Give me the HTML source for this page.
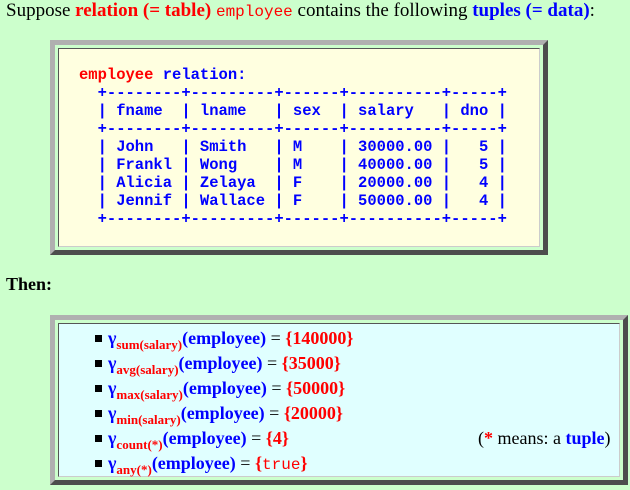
<!DOCTYPE html>
<html><head><style>
body{margin:0;background:#ccffcc;font-family:"Liberation Serif",serif;width:630px;height:490px;overflow:hidden;position:relative}
.p{position:absolute;left:6px;font-size:19px;margin:0;white-space:nowrap}
.r{color:#f00;font-weight:bold}.b{color:#00f;font-weight:bold}
.m{font-family:"Liberation Mono",monospace}
.box{position:absolute;border-style:solid;border-width:5px;border-color:#b0b0b0 #4d4d4d #4d4d4d #b0b0b0;padding:3px;box-sizing:border-box}
.in{border:1px solid;border-color:#555 #ccc #ccc #555;height:100%;box-sizing:border-box;position:relative}
pre{margin:0;position:absolute;left:20px;top:17px;font-family:"Liberation Mono",monospace;font-weight:bold;font-size:15.5px;line-height:18px;color:#00f}
ul{margin:0;padding:0;list-style:none;position:absolute;left:49px;top:2px;width:560px}
li{height:25px;line-height:25px;font-size:18px;font-weight:bold;color:#00f;position:relative;white-space:nowrap}
li:before{content:"";position:absolute;left:-13px;top:9px;width:7px;height:7px;background:#000}
sub{font-size:13px;color:#f00;vertical-align:-5px;line-height:0}
.eq{color:#000;font-weight:normal}
.v{color:#f00}
</style></head><body>
<p class="p" style="top:0px">Suppose <span class="r">relation (= table)</span> <span class="m" style="color:#f00;font-size:16px">employee</span> contains the following <span class="b">tuples (= data)</span>:</p>
<div class="box" style="left:50px;top:40px;width:498px;height:215px"><div class="in" style="background:#ffffe0"><pre><span style="color:#f00">employee</span> relation:
  +--------+---------+------+----------+-----+
  | fname  | lname   | sex  | salary   | dno |
  +--------+---------+------+----------+-----+
  | John   | Smith   | M    | 30000.00 |   5 |
  | Frankl | Wong    | M    | 40000.00 |   5 |
  | Alicia | Zelaya  | F    | 20000.00 |   4 |
  | Jennif | Wallace | F    | 50000.00 |   4 |
  +--------+---------+------+----------+-----+</pre></div></div>
<p class="p" style="top:274px;font-weight:bold;font-size:18px">Then:</p>
<div class="box" style="left:50px;top:315px;width:578px;height:170px"><div class="in" style="background:#e0ffff"><ul>
<li>γ<sub>sum(salary)</sub>(employee) <span class="eq">=</span> <span class="v">{140000}</span></li>
<li>γ<sub>avg(salary)</sub>(employee) <span class="eq">=</span> <span class="v">{35000}</span></li>
<li>γ<sub>max(salary)</sub>(employee) <span class="eq">=</span> <span class="v">{50000}</span></li>
<li>γ<sub>min(salary)</sub>(employee) <span class="eq">=</span> <span class="v">{20000}</span></li>
<li>γ<sub>count(*)</sub>(employee) <span class="eq">=</span> <span class="v">{4}</span><span style="position:absolute;left:370px;color:#000;font-weight:normal">(<span class="r">*</span> means: a <span class="b">tuple</span>)</span></li>
<li>γ<sub>any(*)</sub>(employee) <span class="eq">=</span> <span class="v">{<span class="m" style="font-weight:normal;font-size:16px">true</span>}</span></li>
</ul></div></div>
</body></html>
